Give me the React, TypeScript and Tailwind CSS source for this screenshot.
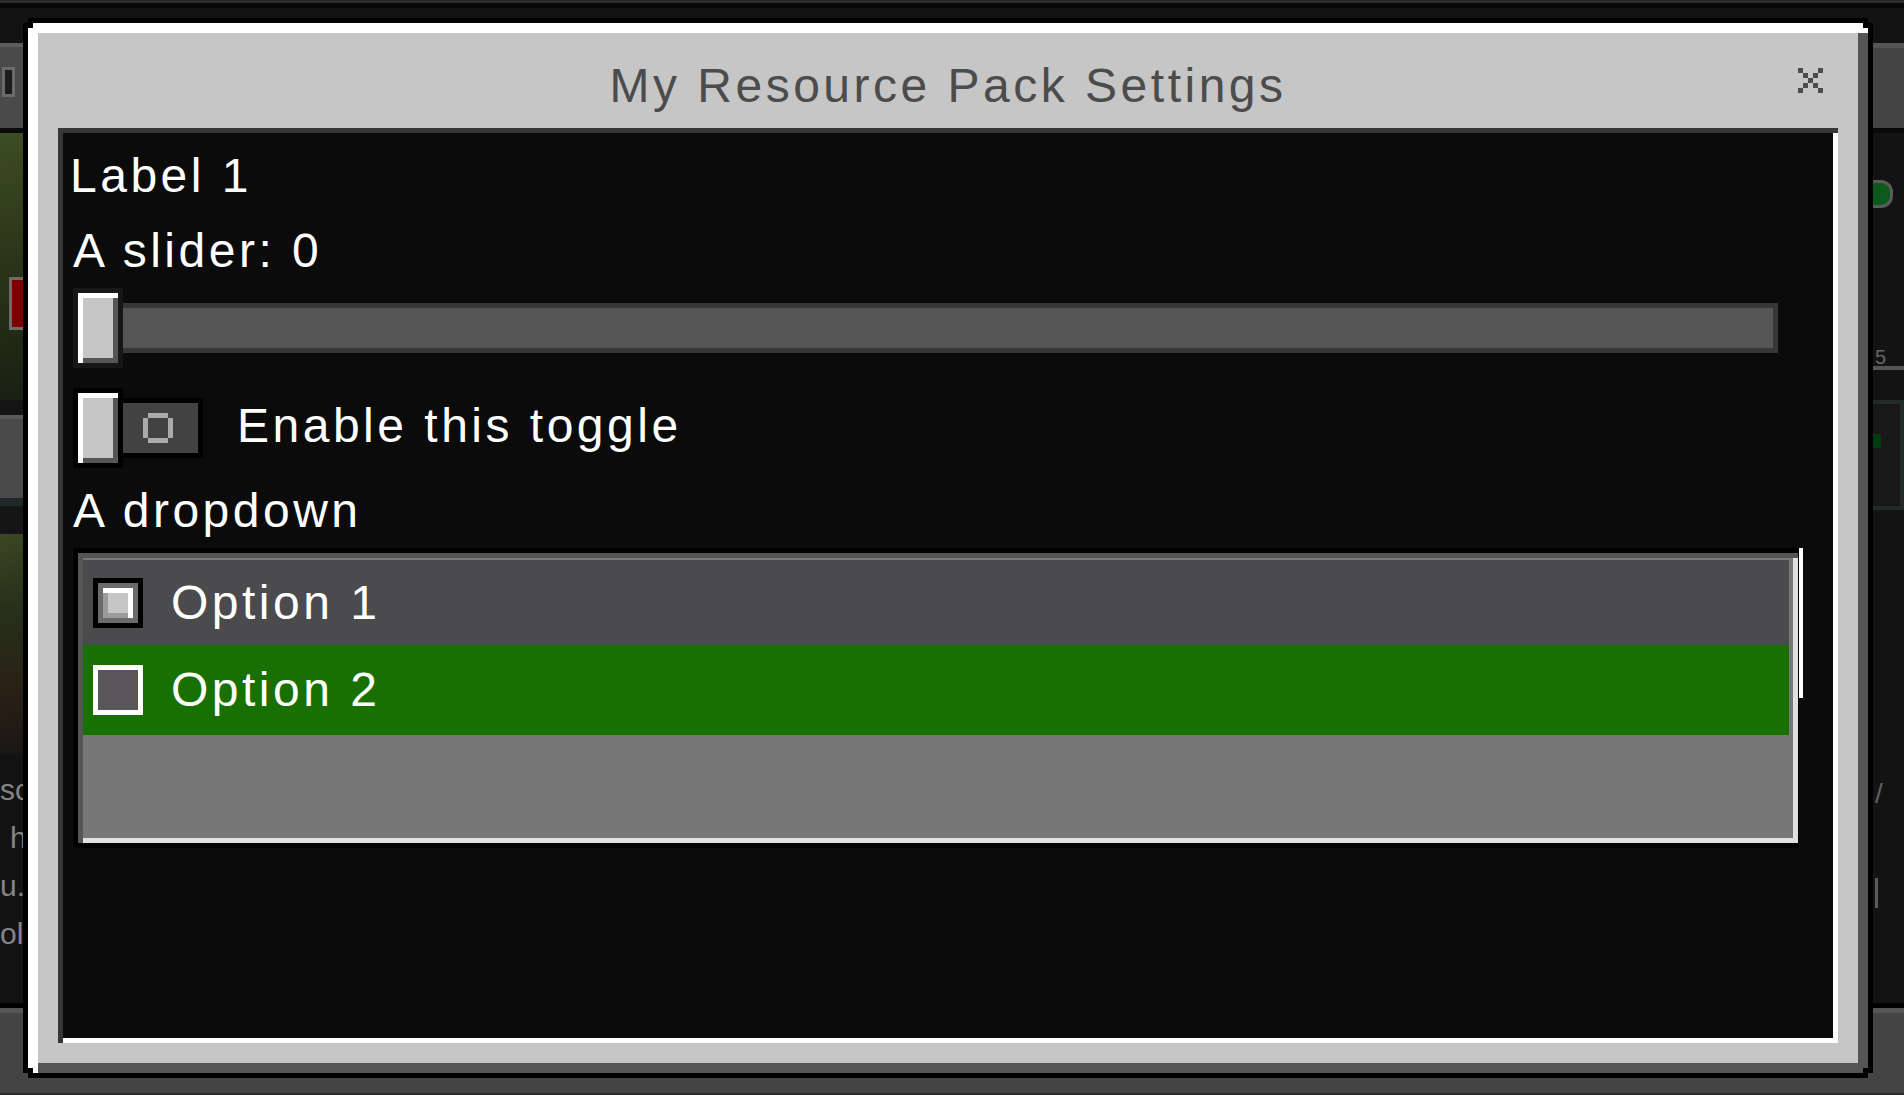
import React from "react";

const mc = "font-['Liberation_Sans',Arial,sans-serif] text-[48px] leading-[48px] tracking-[3.5px] whitespace-nowrap";

function CloseGlyph() {
	return (
		<svg width="25" height="25" viewBox="0 0 5 5" shapeRendering="crispEdges" fill="#4c4c4c">
			<rect x="0" y="0" width="1" height="1" />
			<rect x="4" y="0" width="1" height="1" />
			<rect x="1" y="1" width="1" height="1" />
			<rect x="3" y="1" width="1" height="1" />
			<rect x="2" y="2" width="1" height="1" />
			<rect x="1" y="3" width="1" height="1" />
			<rect x="3" y="3" width="1" height="1" />
			<rect x="0" y="4" width="1" height="1" />
			<rect x="4" y="4" width="1" height="1" />
		</svg>
	);
}

function OffGlyph() {
	return (
		<svg width="30" height="30" viewBox="0 0 6 6" shapeRendering="crispEdges" fill="#ababab">
			<rect x="1" y="0" width="4" height="1" />
			<rect x="1" y="5" width="4" height="1" />
			<rect x="0" y="1" width="1" height="4" />
			<rect x="5" y="1" width="1" height="4" />
		</svg>
	);
}

function Thumb({ outline }: { outline: string }) {
	return (
		<div className={`${outline} p-[5px] shrink-0`}>
			<div className="h-[70px] w-[40px] bg-[#c6c6c6] shadow-[inset_5px_5px_0_#ffffff,inset_-5px_-5px_0_#555555]" />
		</div>
	);
}

function Slider() {
	return (
		<div className="mt-[13px] flex w-[1705px] items-center">
			<Thumb outline="bg-[#171717]" />
			<div className="h-[50px] flex-1 bg-[#555555] shadow-[inset_0_5px_0_#373737,inset_0_-5px_0_#373737,inset_-5px_0_0_#373737]" />
		</div>
	);
}

function Toggle() {
	return (
		<div className="mt-[20px] flex items-start">
			<Thumb outline="bg-black" />
			<div className="mt-[10px] bg-black py-[5px] pr-[5px]">
				<div className="flex h-[50px] w-[75px] items-center bg-[#424242] pl-[20px]">
					<OffGlyph />
				</div>
			</div>
			<span className={`${mc} ml-[34px] mt-[14px] text-white`}>Enable this toggle</span>
		</div>
	);
}

function Dropdown() {
	return (
		<div className="mt-[13px] flex items-start">
			<div className="bg-black pb-[5px] pl-[5px] pr-[1px] pt-[5px]">
				<div className="h-[290px] w-[1720px] bg-[#777777] p-[5px] shadow-[inset_5px_5px_0_#555555,inset_-5px_-5px_0_#e0e0e0]">
					<div className="mt-[2px] flex h-[85px] w-[1706px] items-center gap-[28px] bg-[#4b4a4d] pl-[10px]">
						<div className="bg-black p-[5px]">
							<div className="bg-[#6b6b6b] p-[5px]">
								<div className="h-[30px] w-[30px] bg-[#c6c6c6] shadow-[inset_-5px_5px_0_#ffffff,inset_5px_-5px_0_#9c9c9c]" />
							</div>
						</div>
						<span className={`${mc} text-white`}>Option 1</span>
					</div>
					<div className="flex h-[90px] w-[1706px] items-center gap-[28px] bg-[#187000] pl-[10px]">
						<div className="h-[50px] w-[50px] border-[5px] border-white bg-[#59575b]" />
						<span className={`${mc} text-white`}>Option 2</span>
					</div>
				</div>
			</div>
			<div className="h-[150px] w-[4px] bg-white" />
		</div>
	);
}

function Backdrop() {
	return (
		<div className="flex h-full flex-col">
			<div className="h-[3px] bg-[#2b2b2b]" />
			<div className="h-[5px] bg-[#080808]" />
			<div className="flex flex-1 justify-between bg-[#131313]">
				<div className="flex w-[23px] flex-col overflow-hidden">
					<div className="mt-[35px] h-[85px] bg-[#4a4a4a] shadow-[inset_0_4px_0_#5c5c5c]">
						<div className="ml-[2px] mt-[24px] h-[30px] w-[13px] border-[3px] border-[#6a6a6a] bg-[#1c1c1c]" />
					</div>
					<div className="h-[5px] bg-[#0a0a0a]" />
					<div className="flex h-[267px] flex-col bg-[linear-gradient(165deg,#3d4d24_0%,#2a3719_45%,#1a1f12_100%)]">
						<div className="ml-auto mt-[144px] h-[53px] w-[14px] border-[3px] border-r-0 border-[#6b6b6b] bg-[#7a0000]" />
					</div>
					<div className="h-[15px] bg-[#141414]" />
					<div className="h-[83px] bg-[#4a4a4a] shadow-[inset_0_4px_0_#5a5a5a]" />
					<div className="h-[36px] bg-[#151515] shadow-[inset_0_8px_0_#1e2828]" />
					<div className="h-[219px] bg-[linear-gradient(170deg,#3a4722_0%,#25301a_35%,#2a2117_70%,#1a1612_100%)]" />
					<div className="flex flex-col gap-[18px] pt-[22px] font-['Liberation_Sans',Arial,sans-serif] text-[30px] leading-[30px] text-[#858585]">
						<span className="whitespace-nowrap">sc</span>
						<span className="whitespace-nowrap pl-[10px]">h</span>
						<span className="whitespace-nowrap">u.</span>
						<span className="whitespace-nowrap">ol</span>
					</div>
				</div>
				<div className="flex w-[31px] flex-col overflow-hidden">
					<div className="mt-[35px] h-[85px] bg-[#444444] shadow-[inset_0_5px_0_#555555]" />
					<div className="h-[5px] bg-[#080808]" />
					<div className="ml-[-4px] mt-[47px] h-[28px] w-[24px] rounded-r-[12px] border-[3px] border-[#5a5a5a] bg-[#0b5a1c]" />
					<div className="mt-[140px] h-[22px] border-b-[4px] border-[#555555] pl-[2px] font-['Liberation_Sans',Arial,sans-serif] text-[20px] leading-[18px] text-[#666666]">
						5
					</div>
					<div className="mt-[30px] h-[110px] border-[4px] border-l-0 border-[#222a2a] bg-[#181818] pt-[30px]">
						<div className="h-[14px] w-[8px] bg-[#003a0e]" />
					</div>
					<div className="mt-[270px] pl-[2px] font-['Liberation_Sans',Arial,sans-serif] text-[28px] leading-[28px] text-[#5f5f5f]">/</div>
					<div className="ml-[2px] mt-[70px] h-[30px] w-[3px] bg-[#5a5a5a]" />
				</div>
			</div>
			<div className="h-[5px] bg-black" />
			<div className="h-[5px] bg-[#555555]" />
			<div className="h-[80px] bg-[#444444]" />
			<div className="h-[2px] bg-[#2a2a2a]" />
		</div>
	);
}

export default function App() {
	return (
		<div className="relative h-[1095px] w-[1904px] overflow-hidden bg-[#131313]">
			<Backdrop />
			<div className="absolute left-[23px] top-[18px] h-[1060px] w-[1850px] bg-black p-[5px] [clip-path:polygon(5px_0,1845px_0,1845px_5px,1850px_5px,1850px_1055px,1845px_1055px,1845px_1060px,5px_1060px,5px_1055px,0_1055px,0_5px,5px_5px)]">
				<div className="flex h-[1050px] w-[1840px] flex-col bg-[#c6c6c6] px-[30px] pb-[30px] pt-[10px] shadow-[inset_10px_10px_0_#ffffff,inset_-10px_-10px_0_#555555] [clip-path:polygon(5px_0,1835px_0,1835px_5px,1840px_5px,1840px_1045px,1835px_1045px,1835px_1050px,5px_1050px,5px_1045px,0_1045px,0_5px,5px_5px)]">
					<div className="relative flex h-[95px] justify-center pt-[29px]">
						<span className={`${mc} text-[#4c4c4c]`}>My Resource Pack Settings</span>
						<button className="absolute right-[15px] top-[35px] h-[25px] w-[25px]" aria-label="Close">
							<CloseGlyph />
						</button>
					</div>
					<div className="flex h-[915px] w-[1780px] flex-col bg-[#0b0b0b] pl-[15px] pt-[5px] shadow-[inset_5px_5px_0_#373737,inset_-5px_-5px_0_#ffffff]">
						<span className={`${mc} -ml-[3px] mt-[19px] text-white`}>Label 1</span>
						<span className={`${mc} mt-[27px] text-white`}>A slider: 0</span>
						<Slider />
						<Toggle />
						<span className={`${mc} mt-[19px] text-white`}>A dropdown</span>
						<Dropdown />
					</div>
				</div>
			</div>
		</div>
	);
}
